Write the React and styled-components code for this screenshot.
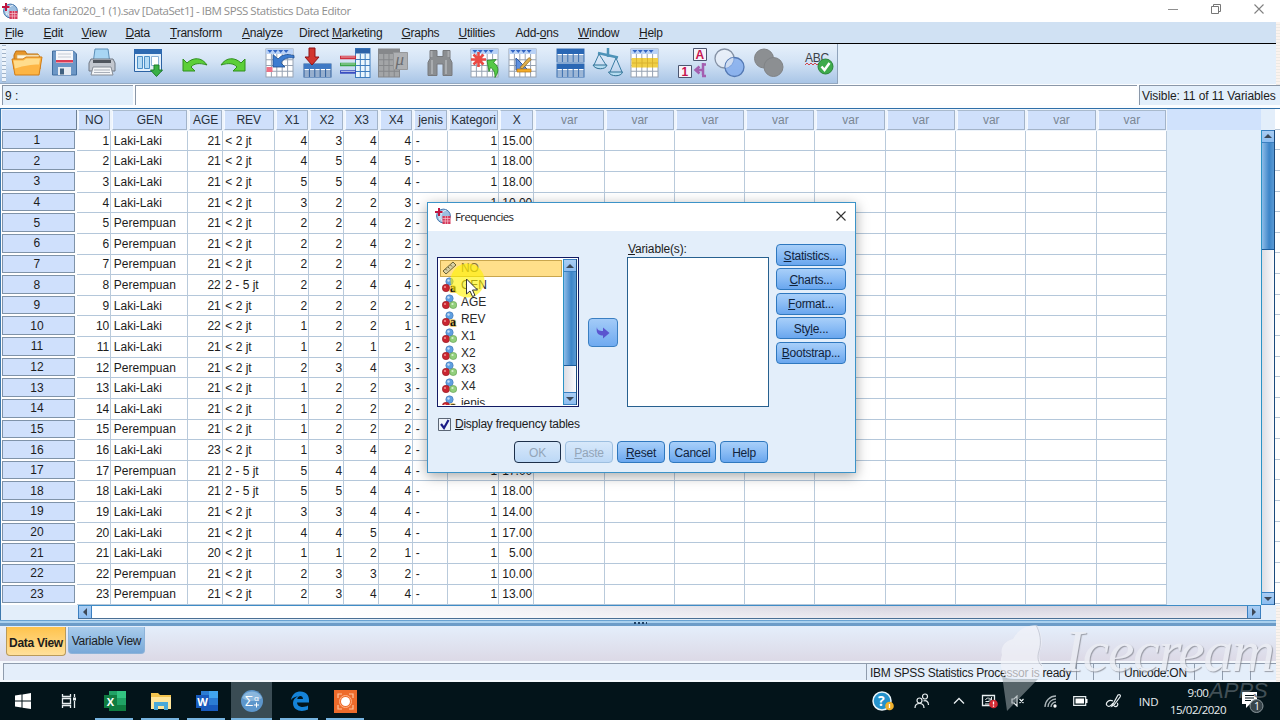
import React from "react";
import styled, { createGlobalStyle, css } from "styled-components";

const GlobalStyle = createGlobalStyle`
  * {
    box-sizing: border-box;
  }

  body {
    margin: 0;
    overflow: hidden;
    font-family: "Liberation Sans", Arial, sans-serif;
    font-size: 12px;
    color: #1c1c1c;
  }

  svg {
    display: block;
  }
`;

const ScreenDiv = styled.div`
  position: relative;
  display: flex;
  flex-direction: column;
  width: 1280px;
  height: 720px;
  overflow: hidden;
  background: #e3eefa;
`;

/* title bar */

const TitleBar = styled.div`
  display: flex;
  align-items: center;
  height: 22px;
  padding-left: 2px;
  background: white;
`;

const TitleText = styled.div`
  flex: 1;
  margin-left: 4px;
  font-family: "Open Sans", sans-serif;
  font-size: 11.5px;
  letter-spacing: ${(props) => props.$spacing || "-0.46px"};
  white-space: nowrap;
  color: ${(props) => props.$color || "#8f8f8f"};
`;

const WindowButton = styled.div`
  display: flex;
  justify-content: center;
  width: 43px;
  padding-bottom: 3px;
`;

/* menu */

const MenuBar = styled.div`
  display: flex;
  align-items: center;
  height: 22px;
  padding: 1px 0 0 5px;
  background: #d0e1f3;
  border-bottom: 1px solid #000;
`;

const MenuItem = styled.div`
  width: ${(props) => props.$width}px;
  letter-spacing: -0.25px;
  white-space: nowrap;
`;

/* toolbar */

const ToolBar = styled.div`
  display: flex;
  height: 40px;
  background: #e3effb;
`;

const ToolGroup = styled.div`
  display: flex;
  align-items: center;
  width: 838px;
  padding-left: 2px;
  background: linear-gradient(#e6f0fb, #d3e3f5 45%, #a9c5e6);
  border-right: 1px solid #8fa3bb;
  border-bottom: 1px solid #93a8c0;
`;

const Grip = styled.div`
  width: 4px;
  height: 37px;
  background: repeating-linear-gradient(#9fb2c8 0 1px, #eef5fc 1px 4px);
`;

const ToolButton = styled.div`
  width: 32px;
  height: 32px;
  margin-left: ${(props) => props.$gap}px;
`;

/* cell editor line */

const EditorRow = styled.div`
  display: flex;
  height: 25px;
  padding: 1px 0 3px 2px;
  background: #fbfdff;
  border-bottom: 1px solid #2f6fa8;
`;

const CellName = styled.div`
  width: 131px;
  padding: 3px 2px;
  background: #e3effb;
  border-top: 1px solid #8a97a8;
  border-left: 1px solid #8a97a8;
`;

const CellValue = styled.div`
  width: 1002px;
  margin-left: 2px;
  background: white;
  border-top: 1px solid #8a97a8;
  border-left: 1px solid #8a97a8;
`;

const VisibleInfo = styled.div`
  flex: 1;
  margin-left: 2px;
  padding: 3px 2px;
  white-space: nowrap;
  letter-spacing: -0.08px;
  background: #e3effb;
  border-top: 1px solid #8a97a8;
  border-left: 1px solid #8a97a8;
`;

/* sheet */

const SheetArea = styled.div`
  display: flex;
  height: 497px;
  border-left: 1px solid #3d78ad;
`;

const SheetGrid = styled.div`
  width: 1166px;
  overflow: hidden;
  background: white;
`;

const columnWidths =
  "75.8px 34.5px 77px 34.5px 52px 34.5px 35px 34.5px 34.5px 34.5px 51.5px 35px repeat(9, 70.3px)";

const HeaderRow = styled.div`
  display: grid;
  grid-template-columns: ${columnWidths};
  height: 22px;
  background: #eef4fb;
`;

const HeaderCell = styled.div`
  display: flex;
  justify-content: center;
  align-items: center;
  margin: 1px;
  padding-top: 1px;
  background: #cfe0fb;
  border: 1px solid #a3b4c9;
  border-left-color: #f4f9ff;
  border-top-color: #a9bacd;
  color: ${(props) => (props.$dim ? "#7b8794" : "#27303a")};
  white-space: nowrap;
`;

const CornerCell = styled.div`
  margin: 1px 0 1px 1px;
  background: #cfe0fc;
  border-right: 1px solid #6e8094;
  border-bottom: 1px solid #6e8094;
`;

const DataRow = styled.div`
  display: grid;
  grid-template-columns: ${columnWidths};
  height: 20.63px;
`;

const RowNumber = styled.div`
  display: flex;
  justify-content: center;
  align-items: center;
  margin: 0 2px 2px 1px;
  padding-right: 3px;
  background: #cfe0fc;
  border: 1px solid #7f93a9;
`;

const Cell = styled.div`
  display: flex;
  align-items: center;
  justify-content: ${(props) => (props.$right ? "flex-end" : "flex-start")};
  padding: 0 1px 0 2.5px;
  border-right: 1px solid #b9cadb;
  border-bottom: 1px solid #b4c7da;
  white-space: nowrap;
`;

const SheetRest = styled.div`
  flex: 1;
  background: linear-gradient(#d0e2fc 21px, #e2eefa 21px);
`;

const EdgeStrip = styled.div`
  width: 5px;
  background: repeating-linear-gradient(#fff 0 19.63px, #b9c7d6 19.63px 20.63px);
`;

const EdgeFade = styled.div`
  position: absolute;
  top: ${(props) => props.$top}px;
  right: 0;
  width: 4px;
  height: ${(props) => props.$height}px;
  background: repeating-linear-gradient(#fbf3ee 0 2px, #ece9e4 2px 3px);
`;

/* scroll bars */

const ScrollColumn = styled.div`
  display: flex;
  flex-direction: column;
  width: ${(props) => props.$width}px;
  margin-top: ${(props) => props.$top || 0}px;
  background: linear-gradient(90deg, #dcdde4, #fbfbfd);
  border-left: 1px solid #2c93c6;
  border-right: 1px solid #1b4a7c;
`;

const ScrollArrow = styled.div`
  display: flex;
  flex: none;
  justify-content: center;
  align-items: center;
  width: ${(props) => props.$width || "auto"};
  height: ${(props) => props.$height || "13px"};
  background: linear-gradient(#a9cdf3, #8dbdf0);
  border: 1px solid #3b7fc0;
  border-width: ${(props) => (props.$width ? "0 1px" : "1px 0")};
`;

const Thumb = styled.div`
  height: ${(props) => props.$height}px;
  background: linear-gradient(90deg, #8ebce8, #3d85c8 60%, #5a9ad4);
  border-bottom: 1px solid #1d5d9c;
`;

const ScrollSpace = styled.div`
  flex: 1;
`;

const ScrollRow = styled.div`
  display: flex;
  height: 15px;
  padding: 0 19px 0 77px;
  border-left: 1px solid #3d78ad;
`;

const ScrollRowInner = styled.div`
  display: flex;
  flex: 1;
  height: 14px;
  border-top: 1px solid #3f8cc6;
  border-bottom: 1px solid #4a6f94;
  background: linear-gradient(#d5d3de, #eae8ef);
`;

const HorizontalThumb = styled.div`
  width: 800px;
  background: linear-gradient(90deg, #fff 30%, transparent);
`;

const Divider = styled.div`
  display: flex;
  justify-content: center;
  align-items: center;
  height: 6px;
  background: linear-gradient(#6aa3d2 1px, #a9d0ee 1px 3px, #6c9cc8 3px);
`;

const DividerGrip = styled.div`
  width: 13px;
  height: 2px;
  background: repeating-linear-gradient(90deg, #1d3f63 0 2px, transparent 2px 4px);
`;

/* tabs and status */

const TabBar = styled.div`
  display: flex;
  align-items: flex-start;
  height: 35px;
  padding: 1px 0 0 6px;
  background: linear-gradient(#e4eefb, #dcd9e6);
`;

const Tab = styled.div`
  display: flex;
  justify-content: center;
  align-items: center;
  width: ${(props) => (props.$active ? 60 : 77)}px;
  height: ${(props) => (props.$active ? 29 : 27)}px;
  margin-right: 2px;
  padding-top: 1px;
  border-radius: 0 0 4px 4px;
  white-space: nowrap;
  letter-spacing: -0.2px;
  background: linear-gradient(#aacdec, #78a8d8);
  border: 1px solid #8db3d9;
  border-top: none;

  ${(props) =>
    props.$active &&
    css`
      padding-top: 4px;
      font-weight: bold;
      letter-spacing: -0.3px;
      background: linear-gradient(#ffc34d, #ffe09a);
      border-color: #b99a5a;
    `}
`;

const StatusBar = styled.div`
  display: flex;
  height: 21px;
  padding: 2px 3px;
  background: #f4f8fd;
`;

const StatusCell = styled.div`
  width: ${(props) => (props.$width ? props.$width + "px" : "auto")};
  flex: ${(props) => (props.$width ? "none" : 1)};
  padding: ${(props) => props.$padding || "2px 3px"};
  background: #e4eefa;
  border-left: 1px solid #8f9cad;
  border-top: 1px solid #8f9cad;
  white-space: nowrap;
  letter-spacing: -0.25px;
`;

/* dialog */

const DialogDiv = styled.div`
  position: absolute;
  left: 427px;
  top: 202px;
  width: 429px;
  height: 271px;
  background: #e3eefa;
  border: 1px solid #3c93c8;
  box-shadow: 0 3px 12px rgba(0, 0, 0, 0.35);
`;

const DialogTitle = styled.div`
  display: flex;
  align-items: center;
  height: 28px;
  padding: 0 8px 2px 7px;
  background: white;
`;

const DialogMain = styled.div`
  display: flex;
  align-items: flex-start;
  height: 176px;
  padding: 13px 9px 0 9px;
`;

const VariableList = styled.div`
  display: flex;
  width: 142px;
  height: 150px;
  margin-top: 13px;
  padding: 1px;
  background: white;
  border: 1px solid #111a63;
`;

const VariableItems = styled.div`
  flex: 1;
  overflow: hidden;
  padding: 1px 1px 0;
`;

const VariableItem = styled.div`
  display: flex;
  align-items: center;
  gap: 4px;
  height: 16.85px;
  padding-left: 2px;
  letter-spacing: -0.1px;
  color: ${(props) => (props.$selected ? "#8a7636" : "#2a2a2a")};
  background: ${(props) => (props.$selected ? "#ffdf8a" : "transparent")};
  box-shadow: ${(props) => (props.$selected ? "inset 0 0 0 1px #c9a64d" : "none")};
`;

const MoveButton = styled.div`
  display: flex;
  justify-content: center;
  align-items: center;
  width: 30px;
  height: 29px;
  margin: 74px 9px 0;
  border-radius: 4px;
  border: 1px solid #3a7fc2;
  background: linear-gradient(#a3cbf8, #6faaf0);
`;

const TargetColumn = styled.div`
  width: 142px;
`;

const TargetLabel = styled.div`
  height: 13px;
  padding-left: 1px;
  line-height: 11px;
  letter-spacing: -0.15px;
`;

const TargetBox = styled.div`
  height: 150px;
  background: white;
  border: 1px solid #27608f;
`;

const SideButtons = styled.div`
  display: flex;
  flex-direction: column;
  gap: 2.4px;
  margin-left: 7px;
`;

const DialogButton = styled.div`
  display: flex;
  justify-content: center;
  align-items: center;
  width: ${(props) => props.$width}px;
  height: 22px;
  padding-top: 1px;
  border-radius: 4px;
  border: 1px solid #2f78bf;
  background: linear-gradient(#a8cff9, #8abcf5 50%, #69a6ee);
  color: #10233c;
  white-space: nowrap;
  letter-spacing: -0.25px;

  ${(props) =>
    props.$disabled &&
    css`
      color: #93a5b8;
      border-color: #9dbfe0;
      background: linear-gradient(#d7e8fa, #bcd8f6);
    `}

  ${(props) =>
    props.$focused &&
    css`
      border-color: #1c2f4a;
    `}
`;

const CheckRow = styled.div`
  display: flex;
  align-items: center;
  gap: 4px;
  height: 28px;
  padding: 6px 0 0 10px;
  letter-spacing: -0.25px;
`;

const DialogFooter = styled.div`
  display: flex;
  gap: 4px;
  padding: 6px 0 0 86px;
`;

/* mouse pointer with its highlight */

const PointerDiv = styled.div`
  position: absolute;
  left: 448px;
  top: 257px;
`;

/* taskbar */

const TaskBar = styled.div`
  display: flex;
  justify-content: space-between;
  height: 38px;
  padding-right: 8px;
  background: #03141a;
  color: #e8eef0;
  font-family: "Open Sans", sans-serif;
`;

const TaskButtons = styled.div`
  display: flex;
  padding-left: 3px;
  gap: 8px;
`;

const TaskButton = styled.div`
  display: flex;
  justify-content: center;
  align-items: center;
  width: ${(props) => (props.$active ? 41 : 38)}px;
  margin-left: ${(props) => (props.$active ? -2 : 0)}px;
  padding: 2px 0 0 1px;
  background: ${(props) => (props.$active ? "#3a4c54" : "none")};
  border-bottom: 2px solid ${(props) => (props.$open ? "#77b4e0" : "transparent")};
`;

const Tray = styled.div`
  display: grid;
  grid-template-columns: 42px 36px 38px 23px 34px 30px 30px 36px 35px 64px 42px;
  justify-items: center;
  align-items: center;
`;

const TrayText = styled.div`
  font-size: 11.5px;
  line-height: 17px;
  text-align: center;
  white-space: nowrap;
  letter-spacing: ${(props) => props.$spacing || "-0.2px"};
`;

const Watermark = styled.div`
  position: absolute;
  left: 998px;
  top: 618px;
  display: flex;
  opacity: 0.75;
`;

const WatermarkWords = styled.div`
  display: flex;
  flex-direction: column;
  align-items: flex-end;
  margin-left: 16px;
`;

const WatermarkName = styled.div`
  font-family: "Liberation Serif", serif;
  font-style: italic;
  font-size: 60px;
  line-height: 66px;
  letter-spacing: -1.4px;
  color: #eceef4;
  text-shadow: 1px 1px 1px #82858e;
`;

const WatermarkSub = styled.div`
  margin: -5px 6px 0 0;
  font-style: italic;
  font-size: 22px;
  line-height: 24px;
  color: #56636a;
`;

const menus = [
  ["", "F", "ile", 38.5],
  ["", "E", "dit", 38],
  ["", "V", "iew", 44],
  ["", "D", "ata", 44.5],
  ["", "T", "ransform", 72],
  ["", "A", "nalyze", 57],
  ["Direct ", "M", "arketing", 102.5],
  ["", "G", "raphs", 57],
  ["", "U", "tilities", 57],
  ["Add-", "o", "ns", 62.5],
  ["", "W", "indow", 61],
  ["", "H", "elp", 40],
];

const headers = ["NO", "GEN", "AGE", "REV", "X1", "X2", "X3", "X4", "jenis", "Kategori", "X"];

const L = "Laki-Laki";
const P = "Perempuan";
const low = "< 2 jt";
const mid = "2 - 5 jt";

const rows = [
  [L, 21, low, 4, 3, 4, 4, "15.00"],
  [L, 21, low, 4, 5, 4, 5, "18.00"],
  [L, 21, low, 5, 5, 4, 4, "18.00"],
  [L, 21, low, 3, 2, 2, 3, "10.00"],
  [P, 21, low, 2, 2, 4, 2, "10.00"],
  [P, 21, low, 2, 2, 4, 2, "10.00"],
  [P, 21, low, 2, 2, 4, 2, "10.00"],
  [P, 22, mid, 2, 2, 4, 4, "12.00"],
  [L, 21, low, 2, 2, 2, 2, "8.00"],
  [L, 22, low, 1, 2, 2, 1, "6.00"],
  [L, 21, low, 1, 2, 1, 2, "6.00"],
  [P, 21, low, 2, 3, 4, 3, "12.00"],
  [L, 21, low, 1, 2, 2, 3, "8.00"],
  [L, 21, low, 1, 2, 2, 2, "7.00"],
  [P, 21, low, 1, 2, 2, 2, "7.00"],
  [L, 23, low, 1, 3, 4, 2, "10.00"],
  [P, 21, mid, 5, 4, 4, 4, "17.00"],
  [L, 21, mid, 5, 5, 4, 4, "18.00"],
  [L, 21, low, 3, 3, 4, 4, "14.00"],
  [L, 21, low, 4, 4, 5, 4, "17.00"],
  [L, 20, low, 1, 1, 2, 1, "5.00"],
  [P, 21, low, 2, 3, 3, 2, "10.00"],
  [P, 21, low, 2, 3, 4, 4, "13.00"],
];

const variables = [
  ["NO", "scale"],
  ["GEN", "string"],
  ["AGE", "nominal"],
  ["REV", "string"],
  ["X1", "nominal"],
  ["X2", "nominal"],
  ["X3", "nominal"],
  ["X4", "nominal"],
  ["jenis", "string"],
];

function SpssLogo() {
  return (
    <svg width="16" height="16" viewBox="0 0 16 16">
      <circle cx="8.5" cy="8" r="6.900" fill="#9dbfe0" stroke="#4778ae" />
      <path d="M5 12a6 6 0 0 1 3-9M8 14a7 7 0 0 1 3-12" stroke="#e7f1fb" fill="none" />
      <path d="M0 4h7.500M4 0v8" stroke="#c01540" strokeWidth="2" />
      <path d="M7.500 8h8v8h-8z" fill="#d43759" />
      <path d="M7.500 10.500h8M7.500 13h8M10.300 8v8M12.700 8v8" stroke="#f7c7d0" strokeWidth=".7" />
    </svg>
  );
}

// small spreadsheet that most of the toolbar icons are built on
function MiniGrid({ x = 2, y = 2, w = 27, h = 28, n = 5, line = "#97a3b3", fill = "#fff", head = "#b9d2f6", marks = true }) {
  const cols = Array.from({ length: n - 1 }, (_, i) => x + (w / n) * (i + 1));
  const lines = [1, 2, 3].map((k) => y + 5 + ((h - 5) / 4) * k);
  return (
    <g>
      <rect x={x} y={y} width={w} height={h} fill={fill} stroke={line} />
      <rect x={x} y={y} width={w} height="5" fill={head} />
      <path
        d={cols.map((c) => `M${c} ${y + 5}V${y + h}`).join("") + lines.map((l) => `M${x} ${l}H${x + w}`).join("")}
        stroke={line}
      />
      {marks && <path d={cols.map((c) => `M${c - 4} ${y + 1}h5l-2.500 3z`).join("")} fill="#3366c4" />}
    </g>
  );
}

function Svg({ children }) {
  return (
    <svg width="32" height="32" viewBox="0 0 32 32">
      {children}
    </svg>
  );
}

const OpenIcon = () => (
  <Svg>
    <path d="M3 8l2-4h9l2 3h11l2 3v12H3z" fill="#e8972a" stroke="#b96f14" />
    <path d="M6 8h22v5H6z" fill="#fff6dc" stroke="#d9b56a" strokeWidth=".7" />
    <path d="M1 12h11l3-2h16l-3 18H4z" fill="#fdb544" stroke="#d07c16" />
    <path d="M2.500 13.500h10l3-2h13.500l-1 6c-8 0-14 1-24 4z" fill="#ffdc8c" />
  </Svg>
);

const SaveIcon = () => (
  <Svg>
    <path d="M3.500 4h21l3 3v21h-24z" fill="#6c97c6" stroke="#416d9e" />
    <path d="M7 4h17v12H7z" fill="#f7f8fb" />
    <path d="M7 13h17v2.500H7z" fill="#dc3d55" />
    <path d="M9 7h13M9 10h13" stroke="#c5ccd6" />
    <path d="M9 20h13v8H9z" fill="#e6ebf1" />
    <path d="M11 21.500h4v6h-4z" fill="#41617f" />
  </Svg>
);

const PrintIcon = () => (
  <Svg>
    <path d="M9 2h13l1.500 11h-16z" fill="#a8d6f4" stroke="#5c8fb7" />
    <path d="M5 12h22l2 4v8H3v-8z" fill="#c2c7cf" stroke="#6e7682" />
    <path d="M7 13h18v3H7z" fill="#50565f" />
    <path d="M7 20h18l2 8H5z" fill="#f4f6f8" stroke="#868d97" />
    <path d="M8 23h16M8 25.500h16" stroke="#a9afb9" />
  </Svg>
);

const RecallIcon = () => (
  <Svg>
    <path d="M2.500 2.500h27v22h-27z" fill="#e4f0fb" stroke="#2b62a3" />
    <path d="M2 2h28v5H2z" fill="#2e6ab1" />
    <path d="M5.500 9.500h5v12h-5zM12.500 9.500h5v12h-5z" fill="#b5dbf5" stroke="#4b8ec6" />
    <path d="M19.500 9.500h7v9h-7z" fill="#fff" stroke="#8ab1d6" />
    <path d="M22 18h5v5h3.500L24.500 29.500 18.500 23H22z" fill="#39b044" stroke="#1f7c2b" />
  </Svg>
);

const UndoIcon = () => (
  <Svg>
    <path d="M4 12v12h12l-4-4c3-3.500 8-4.500 16-2-5-8-14-8-20-2z" fill="#5ccf38" stroke="#2f8f1d" />
  </Svg>
);

const RedoIcon = () => (
  <Svg>
    <path d="M28 12v12H16l4-4c-3-3.500-8-4.500-16-2 5-8 14-8 20-2z" fill="#5ccf38" stroke="#2f8f1d" />
  </Svg>
);

const GotoCaseIcon = () => (
  <Svg>
    <MiniGrid />
    <path d="M2.500 20h6v5h-6z" fill="#ee7085" />
    <path d="M9 7.500V20h12l-4-4c2-4 6-6 13-5V8.500c-7-2-12-1-16 3.500z" fill="#3c7cd0" stroke="#1c4c8e" strokeWidth=".8" />
  </Svg>
);

const GotoVariableIcon = () => (
  <Svg>
    <MiniGrid x={2} y={17} w={27} h={13} head="#3f79c4" line="#2f5f9c" marks={false} />
    <path d="M7 1h6v9h4l-7 8-7-8h4z" fill="#d2362f" stroke="#8d1216" />
  </Svg>
);

const VariablesIcon = () => (
  <Svg>
    <MiniGrid x={15.5} y={1.5} w={14.5} h={29} n={3} head="#2b62a8" line="#3f7dbe" fill="#eaf6fd" marks={false} />
    <path d="M0 10.500h16" stroke="#ce2d3c" strokeWidth="3.500" />
    <path d="M0 17.500h16" stroke="#3aa548" strokeWidth="3.500" />
    <path d="M0 25h16" stroke="#3a4fc0" strokeWidth="3.500" />
    <path d="M1 10h14M1 17h14M1 24.500h14" stroke="#fff" opacity=".6" />
  </Svg>
);

const DescriptivesIcon = () => (
  <Svg>
    <MiniGrid x={1.5} y={2} w={21} h={28} n={4} head="#86888b" fill="#a3a5a7" line="#85878a" marks={false} />
    <path d="M16.500 5.500h14v17h-14z" fill="#aeb0b3" stroke="#96989b" />
    <text x="18.500" y="18" fontFamily="Liberation Serif, serif" fontStyle="italic" fontSize="17" fill="#6a6c70">
      μ
    </text>
  </Svg>
);

const FindIcon = () => (
  <Svg>
    <path d="M6 3.500h7v6h6v-6h7v8l2 4v13h-9V17h-6v11.500H4v-13l2-4z" fill="#8b8e91" stroke="#77797c" />
    <path d="M7.500 4v6M24.500 4v6M8 13v14M22 13v14" stroke="#a9acaf" strokeWidth="2" />
  </Svg>
);

const InsertCaseIcon = () => (
  <Svg>
    <MiniGrid />
    <path d="M9.500 5v15M2 12.500h15M4.500 7.500l10 10M14.500 7.500l-10 10" stroke="#ea4a44" strokeWidth="2.600" />
    <path d="M18 13.500l9-1-2.500 3c5 3 6 9 1.500 15 0-5-1-8-4.500-10l-1.500 4z" fill="#56c947" stroke="#22811f" strokeWidth=".8" />
  </Svg>
);

const InsertVariableIcon = () => (
  <Svg>
    <MiniGrid />
    <path d="M9 11v12h12z" fill="#5e90e0" stroke="#2a56a0" />
    <path d="M13 20.500l9-10 2.200 2-9 9.500z" fill="#e0b04e" stroke="#8e6519" strokeWidth=".7" />
    <path d="M10 22h14v3H10z" fill="#f4ad2b" stroke="#b67615" strokeWidth=".7" />
  </Svg>
);

const SplitIcon = () => (
  <Svg>
    <MiniGrid x={2} y={2} w={27} h={13} head="#2a67b4" line="#3a6eae" marks={false} />
    <MiniGrid x={2} y={17} w={27} h={13} head="#2a67b4" line="#3a6eae" marks={false} />
  </Svg>
);

const WeightIcon = () => (
  <Svg>
    <path d="M6 6l20 4.500M16 1v9" stroke="#4d93b8" strokeWidth="2.500" />
    <path d="M7 7L2 18M7 7l7 11M24 11l-6 14M24 11l6 14" stroke="#3a7da3" fill="none" />
    <path d="M1 18h14c-1 5-12 5-14 0z" fill="#b4dcf1" stroke="#2e7094" />
    <path d="M16.500 25h14c-1 5-12 5-14 0z" fill="#b4dcf1" stroke="#2e7094" />
  </Svg>
);

const SelectIcon = () => (
  <Svg>
    <MiniGrid />
    <path d="M2.500 11h26.500v9.500H2.500z" fill="#f0cf46" />
    <path d="M7.500 11v9.500M13 11v9.500M18.500 11v9.500M23.500 11v9.500M3 16h26" stroke="#d8b230" />
  </Svg>
);

const LabelsIcon = () => (
  <Svg>
    <path d="M16.500 1.500h13v12h-13z" fill="#f6f3fa" stroke="#4c5670" />
    <path d="M1.500 18.500h13v12h-13z" fill="#f6f3fa" stroke="#4c5670" />
    <text x="18.500" y="12" fontSize="12" fontWeight="bold" fill="#c71450">
      A
    </text>
    <text x="4.500" y="29" fontSize="12" fontWeight="bold" fill="#c71450">
      1
    </text>
    <path d="M26 16v12M29 17.500h-3M29 29h-4M26 23h-6M22.500 19.500l-4 3.500 4 3.500" stroke="#a45fb0" strokeWidth="2.500" fill="none" />
  </Svg>
);

const SetsIcon = () => (
  <Svg>
    <circle cx="10.500" cy="11.500" r="9.500" fill="#eef2f8" fillOpacity=".6" stroke="#8592a5" strokeWidth="1.300" />
    <circle cx="20.500" cy="20" r="9.500" fill="#7faaec" fillOpacity=".8" stroke="#5479b4" strokeWidth="1.300" />
    <path d="M19.500 10.500a9.500 9.500 0 0 1-8 10.400a9.500 9.500 0 0 1 8-10.400z" fill="#cfdcf0" />
  </Svg>
);

const AllIcon = () => (
  <Svg>
    <circle cx="10" cy="11.500" r="9.500" fill="#8c8f92" stroke="#808386" />
    <circle cx="19.500" cy="20" r="9.500" fill="#8c8f92" stroke="#808386" />
  </Svg>
);

const SpellIcon = () => (
  <Svg>
    <text x="2" y="15" fontSize="12" letterSpacing="-.2" fill="#3b4148">
      ABC
    </text>
    <path d="M2 18l2-2 2 2 2-2 2 2 2-2 2 2 2-2" stroke="#d0444c" fill="none" />
    <circle cx="22.500" cy="19.500" r="7.500" fill="#3eab4c" stroke="#2b8538" />
    <path d="M18.500 19.500l3 3.500 5-7" stroke="#fff" strokeWidth="2.500" fill="none" />
  </Svg>
);

const tools = [
  [5, OpenIcon],
  [6, SaveIcon],
  [5, PrintIcon],
  [14, RecallIcon],
  [15, UndoIcon],
  [6, RedoIcon],
  [15, GotoCaseIcon],
  [6, GotoVariableIcon],
  [6, VariablesIcon],
  [5, DescriptivesIcon],
  [15, FindIcon],
  [13, InsertCaseIcon],
  [6, InsertVariableIcon],
  [16, SplitIcon],
  [5, WeightIcon],
  [5, SelectIcon],
  [16, LabelsIcon],
  [5, SetsIcon],
  [8, AllIcon],
  [17, SpellIcon],
];

function VariableIcon({ type }) {
  if (type === "scale") {
    return (
      <svg width="15" height="16" viewBox="0 0 15 16">
        <path d="M1 11L11 2l3 3L4 14z" fill="#d8cfa4" stroke="#6b6233" />
        <path d="M3.500 9l1.500 1.500M6 7l1.500 1.500M8.500 5L10 6.500" stroke="#6b6233" />
      </svg>
    );
  }
  return (
    <svg width="15" height="16" viewBox="0 0 15 16">
      <circle cx="7.500" cy="4.500" r="3.700" fill="#5f9fe0" stroke="#3f74b3" strokeWidth=".6" />
      <circle cx="6.500" cy="3.500" r="1.200" fill="#c5def7" />
      <circle cx="4" cy="11" r="3.700" fill="#c92530" stroke="#8f1820" strokeWidth=".6" />
      <circle cx="3" cy="10" r="1.100" fill="#f08c90" />
      {type === "nominal" ? (
        <g>
          <circle cx="11.200" cy="11" r="3.600" fill="#92cf7c" stroke="#5b9a48" strokeWidth=".6" />
          <circle cx="10.500" cy="10" r="1.100" fill="#d9f2cf" />
        </g>
      ) : (
        <text x="8" y="14.500" fontSize="12" fontWeight="bold" fontFamily="Liberation Serif, serif" fill="#111" stroke="#e8c860" strokeWidth="1.500" paintOrder="stroke">
          a
        </text>
      )}
    </svg>
  );
}

function Arrow({ dir }) {
  const paths = {
    up: "M0 6l4-4 4 4z",
    down: "M0 2l4 4 4-4z",
    left: "M6 0L2 4l4 4z",
    right: "M2 0l4 4-4 4z",
  };
  return (
    <svg width="8" height="8" viewBox="0 0 8 8">
      <path d={paths[dir]} fill="#3d4857" />
    </svg>
  );
}

function CloseIcon({ color }) {
  return (
    <svg width="12" height="12" viewBox="0 0 12 12">
      <path d="M1.500 1.500l9 9M10.500 1.500l-9 9" stroke={color} strokeWidth="1.100" />
    </svg>
  );
}

function Sheet() {
  return (
    <SheetArea>
      <SheetGrid>
        <HeaderRow>
          <CornerCell />
          {headers.map((name) => (
            <HeaderCell key={name}>{name}</HeaderCell>
          ))}
          {Array.from({ length: 9 }, (_, i) => (
            <HeaderCell key={i} $dim>
              var
            </HeaderCell>
          ))}
        </HeaderRow>
        {rows.map(([gen, age, rev, x1, x2, x3, x4, total], index) => (
          <DataRow key={index}>
            <RowNumber>{index + 1}</RowNumber>
            <Cell $right>{index + 1}</Cell>
            <Cell>{gen}</Cell>
            <Cell $right>{age}</Cell>
            <Cell>{rev}</Cell>
            <Cell $right>{x1}</Cell>
            <Cell $right>{x2}</Cell>
            <Cell $right>{x3}</Cell>
            <Cell $right>{x4}</Cell>
            <Cell>-</Cell>
            <Cell $right>1</Cell>
            <Cell $right>{total}</Cell>
            {Array.from({ length: 9 }, (_, i) => (
              <Cell key={i} />
            ))}
          </DataRow>
        ))}
      </SheetGrid>
      <SheetRest />
      <ScrollColumn $width={14} $top={21}>
        <ScrollArrow>
          <Arrow dir="up" />
        </ScrollArrow>
        <Thumb $height={107} />
        <ScrollSpace />
        <ScrollArrow>
          <Arrow dir="down" />
        </ScrollArrow>
      </ScrollColumn>
      <EdgeStrip />
    </SheetArea>
  );
}

function FrequenciesDialog() {
  return (
    <DialogDiv>
      <DialogTitle>
        <SpssLogo />
        <TitleText $color="#222" $spacing="-0.6px">
          Frequencies
        </TitleText>
        <CloseIcon color="#333" />
      </DialogTitle>
      <DialogMain>
        <VariableList>
          <VariableItems>
            {variables.map(([name, type], index) => (
              <VariableItem key={name} $selected={index === 0}>
                <VariableIcon type={type} />
                {name}
              </VariableItem>
            ))}
          </VariableItems>
          <ScrollColumn $width={14}>
            <ScrollArrow>
              <Arrow dir="up" />
            </ScrollArrow>
            <Thumb $height={94} />
            <ScrollSpace />
            <ScrollArrow>
              <Arrow dir="down" />
            </ScrollArrow>
          </ScrollColumn>
        </VariableList>
        <MoveButton>
          <svg width="14" height="14" viewBox="0 0 14 14">
            <path d="M1 1c0 3 2 4 6 4V1.500l6.500 5.500L7 12.500V9.500C3 9.500-.5 7 1 1z" fill="#5a55cf" />
          </svg>
        </MoveButton>
        <TargetColumn>
          <TargetLabel>
            <u>V</u>ariable(s):
          </TargetLabel>
          <TargetBox />
        </TargetColumn>
        <SideButtons>
          <DialogButton $width={70}>
            <span><u>S</u>tatistics...</span>
          </DialogButton>
          <DialogButton $width={70}>
            <span><u>C</u>harts...</span>
          </DialogButton>
          <DialogButton $width={70}>
            <span><u>F</u>ormat...</span>
          </DialogButton>
          <DialogButton $width={70}>
            <span>Sty<u>l</u>e...</span>
          </DialogButton>
          <DialogButton $width={70}>
            <span><u>B</u>ootstrap...</span>
          </DialogButton>
        </SideButtons>
      </DialogMain>
      <CheckRow>
        <svg width="13" height="13" viewBox="0 0 13 13">
          <path d="M.5.500h12v12H.5z" fill="#eef3fa" stroke="#5b6675" />
          <path d="M3 6l3 4 4.500-8" fill="none" stroke="#1b1b86" strokeWidth="2.200" />
        </svg>
        <span><u>D</u>isplay frequency tables</span>
      </CheckRow>
      <DialogFooter>
        <DialogButton $width={47} $disabled $focused>OK</DialogButton>
        <DialogButton $width={48} $disabled>
          <span><u>P</u>aste</span>
        </DialogButton>
        <DialogButton $width={48}>
          <span><u>R</u>eset</span>
        </DialogButton>
        <DialogButton $width={47}>Cancel</DialogButton>
        <DialogButton $width={48}>Help</DialogButton>
      </DialogFooter>
    </DialogDiv>
  );
}

function Pointer() {
  return (
    <PointerDiv>
      <svg width="42" height="42" viewBox="0 0 42 42">
        <circle cx="19.500" cy="23.500" r="17" fill="#fff200" opacity=".62" />
        <path d="M18.500 22v15l3.500-3 2.500 5.500 2.500-1-2.500-5.500h5z" fill="#fff" stroke="#333" strokeWidth="1" />
      </svg>
    </PointerDiv>
  );
}

function OfficeIcon({ letter, dark, mid, light }) {
  return (
    <svg width="24" height="22" viewBox="0 0 24 22">
      <path d="M6 1h17v20H6z" fill={mid} />
      <path d="M14 1h9v7h-9z" fill={light} />
      <path d="M14 15h9v6H6v-6z" fill={dark} />
      <path d="M1 5h13v13H1z" fill={dark} />
      <text x="7.500" y="15.500" fontSize="11" fontWeight="bold" fill="#fff" textAnchor="middle">
        {letter}
      </text>
    </svg>
  );
}

function Taskbar() {
  return (
    <TaskBar>
      <TaskButtons>
        <TaskButton>
          <svg width="16" height="16" viewBox="0 0 16 16">
            <path d="M0 2.500l6.500-1v6H0zM7.500 1.400L16 0v7.500H7.500zM0 8.500h6.500v6l-6.500-1zM7.500 8.500H16V16l-8.500-1.300z" fill="#fff" />
          </svg>
        </TaskButton>
        <TaskButton>
          <svg width="16" height="14" viewBox="0 0 16 14">
            <path d="M1.500 0v2.500h8V0M1.500 14v-2.500h8V14M1.500 4.500h8v5h-8zM13.500 0v3M13.500 7v7" fill="none" stroke="#e8eef0" strokeWidth="1.300" />
            <path d="M12 3.500h3v3h-3z" fill="#e8eef0" />
          </svg>
        </TaskButton>
        <TaskButton $open>
          <OfficeIcon letter="X" dark="#107c41" mid="#21a366" light="#33c481" />
        </TaskButton>
        <TaskButton $open>
          <svg width="22" height="18" viewBox="0 0 22 18">
            <path d="M1 1h7l2 2h11v14H1z" fill="#f2c44e" />
            <path d="M1 5h20v12H1z" fill="#ffe59a" />
            <path d="M4 10h14v8h-4v-4H8v4H4z" fill="#4aa9d8" />
          </svg>
        </TaskButton>
        <TaskButton $open>
          <OfficeIcon letter="W" dark="#185abd" mid="#2b7cd3" light="#41a5ee" />
        </TaskButton>
        <TaskButton $open $active>
          <svg width="24" height="24" viewBox="0 0 24 24">
            <circle cx="12" cy="12" r="11" fill="#5d96cb" />
            <path d="M2 9a11 11 0 0 1 20 0c-6 4-14 4-20 0z" fill="#a8cbe9" opacity=".6" />
            <text x="5" y="17" fontSize="14" fill="#fff">Σ</text>
            <text x="14" y="12" fontSize="8" fill="#fff">α</text>
            <path d="M14 16h5M16.500 13.500v5" stroke="#fff" />
          </svg>
        </TaskButton>
        <TaskButton $open>
          <svg width="20" height="20" viewBox="0 0 20 20">
            <path d="M1 9C2 3 6 .5 10.500.500c5.500 0 8.500 4 8.500 8.500v2.500H7c.3 5 7 5.500 11 3V18.500C12 21.500 3 20 3 12c0-3 2-5.500 5-6.700C5 5.500 2.500 7 1 9zM7.200 8H13c0-4-5-4-5.800 0z" fill="#1583d8" />
          </svg>
        </TaskButton>
        <TaskButton $open>
          <svg width="23" height="23" viewBox="0 0 23 23">
            <rect width="23" height="23" fill="#ee6b2b" />
            <circle cx="11.500" cy="11.500" r="4.500" fill="#fff" />
            <path d="M4 8V4h4M15 4h4v4M19 15v4h-4M8 19H4v-4" stroke="#ffc49e" strokeWidth="1.200" fill="none" />
            <circle cx="11.500" cy="11.500" r="6" stroke="#ffb184" fill="none" />
          </svg>
        </TaskButton>
      </TaskButtons>
      <Tray>
        <svg width="22" height="20" viewBox="0 0 22 20">
          <circle cx="10" cy="10" r="9" fill="#2492cc" stroke="#e9f5fb" strokeWidth="1.500" />
          <text x="6" y="15" fontSize="14" fontWeight="bold" fill="#fff">?</text>
          <circle cx="17.500" cy="15" r="4.300" fill="#f1b12c" />
          <path d="M17.500 13v4" stroke="#fff" strokeWidth="1.300" />
        </svg>
        <svg width="16" height="16" viewBox="0 0 16 16" fill="none" stroke="#e8eef0" strokeWidth="1.200">
          <circle cx="5.500" cy="7.500" r="2.500" />
          <circle cx="11" cy="3.500" r="2.500" />
          <path d="M1 15c0-6 9-6 9 0M9.500 8c2-1 5 0 5 4" />
        </svg>
        <svg width="12" height="8" viewBox="0 0 12 8" fill="none" stroke="#e8eef0" strokeWidth="1.300">
          <path d="M1 6.500l5-5 5 5" />
        </svg>
        <svg width="17" height="16" viewBox="0 0 17 16">
          <path d="M1.500 2.500h12v10h-12z" fill="none" stroke="#e8eef0" strokeWidth="1.300" />
          <path d="M4.500 7c1-3 5-2 6 0M10.500 4v3h-3M4 11h6M4.500 8.500h4" stroke="#e8eef0" fill="none" />
          <circle cx="12.500" cy="11" r="4.300" fill="#d42a33" />
          <path d="M12.500 8.500v3M12.500 12.500v1.200" stroke="#fff" strokeWidth="1.300" />
        </svg>
        <svg width="14" height="12" viewBox="0 0 14 12" fill="none" stroke="#e8eef0" strokeWidth="1.200">
          <path d="M1 4h2l3-3v10L3 8H1zM8.500 4l4 4M12.500 4l-4 4" />
        </svg>
        <svg width="13" height="13" viewBox="0 0 13 13" fill="none" stroke="#aab4b8" strokeWidth="1.300">
          <path d="M1 12A11 11 0 0 1 12 1M4 12a8 8 0 0 1 8-8M7 12a5 5 0 0 1 5-5" />
          <circle cx="11" cy="11" r="1" fill="#fff" stroke="#fff" />
        </svg>
        <svg width="15" height="10" viewBox="0 0 15 10">
          <path d="M.7.700h12v8.600H.7z" fill="none" stroke="#e8eef0" strokeWidth="1.200" />
          <path d="M2.500 2.500h8.500v5H2.500zM13 3h1.500v4H13z" fill="#fff" />
        </svg>
        <svg width="17" height="16" viewBox="0 0 17 16" fill="none" stroke="#e8eef0" strokeWidth="1.200">
          <path d="M7 13L13 2c1.500-1 3 0 2 2L9 12l-2 1zM8 8C4 6 0 10 2 12.500s5-1 6-2.500M9 13c3 2 5-2 3-3" />
        </svg>
        <TrayText $spacing="-0.2px">IND</TrayText>
        <TrayText $spacing="-0.5px">
          9:00
          <br />
          15/02/2020
        </TrayText>
        <svg width="28" height="24" viewBox="0 0 28 24">
          <path d="M5 3h15v12h-7l-4 4v-4H5z" fill="#fff" />
          <path d="M8 6.500h9M8 9h9M8 11.500h6" stroke="#03141a" />
          <circle cx="19.500" cy="17" r="6.500" fill="#38454b" stroke="#8a969b" />
          <text x="17" y="21" fontSize="10.500" fill="#fff">1</text>
        </svg>
      </Tray>
    </TaskBar>
  );
}

function IcecreamMark() {
  return (
    <Watermark>
      <svg width="50" height="100" viewBox="0 0 50 100">
        <path d="M39 7c-12 0-20 6-24 14C7 23 2 29 4 37c-3 7-1 18 5 22l26 2c10-2 11-8 10-13-4-6-5-12-2-18 2-8 0-16-4-23z" fill="#f2f3f8" opacity=".9" />
        <path d="M4 57c3 3 7 4 12 4h24L9 93z" fill="#9aa3a8" opacity=".75" />
        <path d="M38 7c4 7 6 17 3 26-2 6-1 12 3 15" stroke="#9fa3b2" fill="none" opacity=".6" />
      </svg>
      <WatermarkWords>
        <WatermarkName>Icecream</WatermarkName>
        <WatermarkSub>APPS</WatermarkSub>
      </WatermarkWords>
    </Watermark>
  );
}

export default function App() {
  return (
    <ScreenDiv>
      <GlobalStyle />
      <TitleBar>
        <SpssLogo />
        <TitleText>*data fani2020_1 (1).sav [DataSet1] - IBM SPSS Statistics Data Editor</TitleText>
        <WindowButton>
          <svg width="12" height="12" viewBox="0 0 12 12">
            <path d="M1 6.500h10" stroke="#8f8f8f" />
          </svg>
        </WindowButton>
        <WindowButton>
          <svg width="12" height="12" viewBox="0 0 12 12" fill="none" stroke="#777">
            <path d="M1.500 3.500h7v7h-7zM3.500 3.500v-2h7v7h-2" />
          </svg>
        </WindowButton>
        <WindowButton>
          <CloseIcon color="#808080" />
        </WindowButton>
      </TitleBar>
      <MenuBar>
        {menus.map(([before, key, after, width]) => (
          <MenuItem key={before + key + after} $width={width}>
            {before}
            <u>{key}</u>
            {after}
          </MenuItem>
        ))}
      </MenuBar>
      <ToolBar>
        <ToolGroup>
          <Grip />
          {tools.map(([gap, Icon], index) => (
            <ToolButton key={index} $gap={gap}>
              <Icon />
            </ToolButton>
          ))}
        </ToolGroup>
      </ToolBar>
      <EditorRow>
        <CellName>9 :</CellName>
        <CellValue />
        <VisibleInfo>Visible: 11 of 11 Variables</VisibleInfo>
      </EditorRow>
      <Sheet />
      <ScrollRow>
        <ScrollRowInner>
          <ScrollArrow $width="14px" $height="12px">
            <Arrow dir="left" />
          </ScrollArrow>
          <HorizontalThumb />
          <ScrollSpace />
          <ScrollArrow $width="14px" $height="12px">
            <Arrow dir="right" />
          </ScrollArrow>
        </ScrollRowInner>
      </ScrollRow>
      <Divider>
        <DividerGrip />
      </Divider>
      <TabBar>
        <Tab $active>Data View</Tab>
        <Tab>Variable View</Tab>
      </TabBar>
      <StatusBar>
        <StatusCell />
        <StatusCell $width={210}>IBM SPSS Statistics Processor is ready</StatusCell>
        <StatusCell $width={17} />
        <StatusCell $width={26} />
        <StatusCell $width={75} $padding="2px 4px">Unicode:ON</StatusCell>
        <StatusCell $width={28} />
        <StatusCell $width={28} />
        <StatusCell $width={27} />
      </StatusBar>
      <Taskbar />
      <EdgeFade $top={22} $height={63} />
      <EdgeFade $top={606} $height={76} />
      <FrequenciesDialog />
      <Pointer />
      <IcecreamMark />
    </ScreenDiv>
  );
}
